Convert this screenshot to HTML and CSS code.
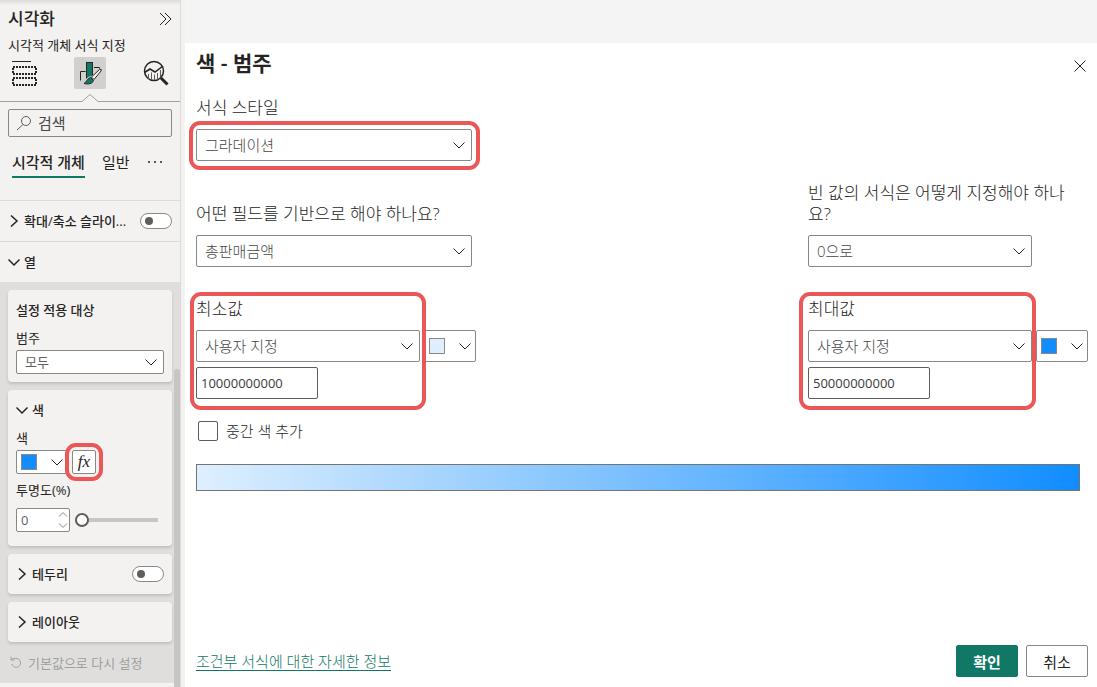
FILE: index.html
```html
<!DOCTYPE html>
<html lang="ko">
<head>
    <meta charset="UTF-8">
    <meta name="viewport" content="width=device-width, initial-scale=1.0">
    <title>색 - 범주</title>
    <link rel="stylesheet" href="styles.css">
</head>
<body>
    <svg class="defs" width="0" height="0" aria-hidden="true">
        <symbol id="chevron" viewBox="0 0 12 12"><path d="M0.5 3.5 L6 9 L11.5 3.5"/></symbol>
        <symbol id="chevron-right" viewBox="0 0 12 12"><path d="M3 0.5 L9 6 L3 11.5"/></symbol>
    </svg>

    <aside class="sidebar">
        <div class="pane-header">
            <h2>시각화</h2>
            <button class="icon-btn collapse" aria-label="접기">
                <svg width="14" height="14" viewBox="0 0 14 14"><path d="M2 1 L8 7 L2 13 M7 1 L13 7 L7 13"/></svg>
            </button>
        </div>
        <p class="pane-subtitle">시각적 개체 서식 지정</p>

        <div class="pane-icons">
            <button class="icon-btn" aria-label="시각적 개체 빌드">
                <svg width="32" height="32" viewBox="0 0 32 32">
                    <path d="M4 4.5 H23"/>
                    <path class="dashed" d="M4.5 9.5 H27.5 V16.5 H4.5 Z M4.5 20.5 H27.5 V27.5 H4.5 Z"/>
                </svg>
            </button>
            <button class="icon-btn active" aria-label="시각적 개체 서식 지정">
                <svg width="32" height="32" viewBox="0 0 32 32">
                    <path d="M11.5 14.5 H6.5 V23.5 M20 10.5 H25.5 V13"/>
                    <rect class="teal" x="12.5" y="5.5" width="6" height="17"/>
                    <path class="halo" d="M27 13 L19 21.5 C14 21 14 25 11 26"/>
                    <path class="handle" d="M17.5 20 L25.5 12.5 Q28 11.5 27 14 L20 22.5 Z"/>
                    <path class="teal" d="M16.5 20.5 L19.5 23.5 C18.5 27 14 27.5 10 26.5 C13 25 13 21.5 16.5 20.5 Z"/>
                </svg>
            </button>
            <button class="icon-btn" aria-label="분석">
                <svg width="32" height="32" viewBox="0 0 32 32">
                    <circle class="lens" cx="14" cy="14" r="9.5"/>
                    <path class="lens" d="M4.5 15.5 L10 12 L15 15 L23 9"/>
                    <path class="bars" d="M8.5 22 V17 M11.5 23 V15.5 M14.5 23 V17.5 M17.5 23 V16 M20.5 20 V13"/>
                    <path class="thick" d="M21 21 L27.5 27.5"/>
                </svg>
            </button>
        </div>
        <svg class="notch" width="16" height="8" viewBox="0 0 16 8"><path d="M0 7.5 L8 0.5 L16 7.5"/></svg>

        <div class="search">
            <svg width="16" height="16" viewBox="0 0 16 16"><circle cx="10" cy="6" r="4.5"/><path d="M7 9.5 L1 15"/></svg>
            <input type="text" placeholder="검색" aria-label="검색">
        </div>

        <nav class="tabs">
            <button class="tab selected">시각적 개체</button>
            <button class="tab">일반</button>
            <button class="tab more" aria-label="기타">
                <svg width="16" height="4" viewBox="0 0 16 4"><circle cx="2" cy="2" r="1"/><circle cx="8" cy="2" r="1"/><circle cx="14" cy="2" r="1"/></svg>
            </button>
        </nav>

        <div class="section-row">
            <svg class="chev" width="12" height="12"><use href="#chevron-right"/></svg>
            <label for="zoomSlider">확대/축소 슬라이...</label>
            <input type="checkbox" class="toggle" id="zoomSlider">
        </div>
        <div class="section-row">
            <svg class="chev" width="12" height="12"><use href="#chevron"/></svg>
            <span>열</span>
        </div>

        <div class="cards">
            <section class="card">
                <h3>설정 적용 대상</h3>
                <label class="field-label" for="category">범주</label>
                <div class="select small">
                    <select id="category"><option>모두</option></select>
                    <svg class="chev" width="12" height="12"><use href="#chevron"/></svg>
                </div>
            </section>

            <section class="card">
                <div class="card-head">
                    <svg class="chev" width="12" height="12"><use href="#chevron"/></svg>
                    <span>색</span>
                </div>
                <span class="field-label">색</span>
                <div class="color-row">
                    <button class="color-btn small" aria-label="색">
                        <span class="swatch blue"></span>
                        <svg class="chev" width="12" height="12"><use href="#chevron"/></svg>
                    </button>
                    <div class="marked mark-fx">
                        <button class="fx-btn">fx</button>
                    </div>
                </div>
                <label class="field-label opacity-label" for="opacity">투명도(%)</label>
                <div class="opacity-row">
                    <div class="spin">
                        <input type="text" id="opacity" value="0">
                        <svg width="10" height="18" viewBox="0 0 10 18"><path d="M1 5.5 L5 1.5 L9 5.5 M1 12.5 L5 16.5 L9 12.5"/></svg>
                    </div>
                    <input type="range" min="0" max="100" value="0" aria-label="투명도">
                </div>
            </section>

            <section class="card row">
                <svg class="chev" width="12" height="12"><use href="#chevron-right"/></svg>
                <label for="border">테두리</label>
                <input type="checkbox" class="toggle" id="border">
            </section>
            <section class="card row">
                <svg class="chev" width="12" height="12"><use href="#chevron-right"/></svg>
                <span>레이아웃</span>
            </section>

            <button class="reset" disabled>
                <svg width="12" height="12" viewBox="0 0 12 12"><path d="M1 0.5 V4 H4.5 M1.2 4 C4 1 10.5 2 10.5 7 C10.5 12.5 2.5 12.5 2 8"/></svg>
                기본값으로 다시 설정
            </button>
        </div>
        <div class="scrollbar"></div>
    </aside>

    <main class="dialog">
        <header class="dialog-header">
            <h1>색 - 범주</h1>
            <button class="icon-btn close" aria-label="닫기">
                <svg width="12" height="12" viewBox="0 0 12 12"><path d="M0.5 0.5 L11.5 11.5 M11.5 0.5 L0.5 11.5"/></svg>
            </button>
        </header>

        <div class="field style-field">
            <label for="formatStyle">서식 스타일</label>
            <div class="select wide marked mark-style">
                <select id="formatStyle"><option>그라데이션</option></select>
                <svg class="chev" width="12" height="12"><use href="#chevron"/></svg>
            </div>
        </div>

        <div class="fields">
            <div class="field">
                <label for="baseField">어떤 필드를 기반으로 해야 하나요?</label>
                <div class="select wide">
                    <select id="baseField"><option>총판매금액</option></select>
                    <svg class="chev" width="12" height="12"><use href="#chevron"/></svg>
                </div>
            </div>
            <div class="field">
                <label for="emptyValue">빈 값의 서식은 어떻게 지정해야 하나요?</label>
                <div class="select">
                    <select id="emptyValue"><option>0으로</option></select>
                    <svg class="chev" width="12" height="12"><use href="#chevron"/></svg>
                </div>
            </div>
        </div>

        <div class="fields">
            <div class="bound">
                <div class="field marked mark-min">
                    <label for="minType">최소값</label>
                    <div class="select">
                        <select id="minType"><option>사용자 지정</option></select>
                        <svg class="chev" width="12" height="12"><use href="#chevron"/></svg>
                    </div>
                    <input type="text" class="number" value="10000000000" aria-label="최소값 입력">
                </div>
                <button class="color-btn" aria-label="최소값 색">
                    <span class="swatch light"></span>
                    <svg class="chev" width="12" height="12"><use href="#chevron"/></svg>
                </button>
            </div>
            <div class="bound">
                <div class="field marked mark-max">
                    <label for="maxType">최대값</label>
                    <div class="select">
                        <select id="maxType"><option>사용자 지정</option></select>
                        <svg class="chev" width="12" height="12"><use href="#chevron"/></svg>
                    </div>
                    <input type="text" class="number" value="50000000000" aria-label="최대값 입력">
                </div>
                <button class="color-btn" aria-label="최대값 색">
                    <span class="swatch blue"></span>
                    <svg class="chev" width="12" height="12"><use href="#chevron"/></svg>
                </button>
            </div>
        </div>

        <label class="check"><input type="checkbox"> 중간 색 추가</label>

        <div class="gradient"></div>

        <footer class="dialog-footer">
            <a href="#">조건부 서식에 대한 자세한 정보</a>
            <button class="btn primary">확인</button>
            <button class="btn">취소</button>
        </footer>
    </main>
</body>
</html>
```

FILE: styles.css
```css
* {
    box-sizing: border-box;
}
body {
    margin: 0;
    display: flex;
    min-height: 100vh;
    font-family: "Open Sans", "Noto Sans CJK KR", sans-serif;
    font-size: 13px;
    line-height: 20px;
    color: #252423;
    background: #f3f2f1;
}
h1, h2, h3, p {
    margin: 0;
}
button, input, select {
    font-family: inherit;
    color: inherit;
    margin: 0;
}
button {
    padding: 0;
    border: none;
    background: none;
}
svg {
    display: block;
    flex: none;
    fill: none;
    stroke: #252423;
}
.defs {
    position: absolute;
}

/* left pane */
.sidebar {
    position: relative;
    flex: none;
    width: 181px;
    height: 100vh;
    overflow: hidden;
    border-right: 1px solid #dddbd9;
    background: linear-gradient(#dcdbda, #f3f2f1 5px);
}
.pane-header {
    display: flex;
    align-items: center;
    justify-content: space-between;
    height: 36px;
    padding: 2px 8px 0;
}
.pane-header h2 {
    font-size: 17px;
    font-weight: 500;
}
.pane-subtitle {
    padding: 0 8px;
    line-height: 18px;
}
.pane-icons {
    display: flex;
    justify-content: space-between;
    padding: 3px 8px 0;
}
.pane-icons .icon-btn {
    width: 32px;
    height: 32px;
    border-radius: 2px;
}
.pane-icons .active {
    background: #d2d0ce;
}
.dashed {
    stroke-dasharray: 2 1;
    stroke-width: 2;
    shape-rendering: crispEdges;
}
.teal {
    fill: #117865;
}
.halo {
    stroke: #d2d0ce;
    stroke-width: 5;
}
.handle {
    fill: #f3f2f1;
}
.lens {
    stroke-width: 1.5;
}
.bars {
    stroke: #605e5c;
}
.thick {
    stroke-width: 3;
}
.notch {
    width: 100%;
    margin-top: 5px;
    stroke: #a19f9d;
    background: linear-gradient(#a19f9d, #a19f9d) left bottom / 82px 1px no-repeat,
                linear-gradient(#a19f9d, #a19f9d) right bottom / 82px 1px no-repeat;
}
.search {
    display: flex;
    align-items: center;
    gap: 6px;
    height: 28px;
    margin: 7px 8px 0;
    padding: 0 7px;
    border: 1px solid #8a8886;
    border-radius: 2px;
}
.search svg {
    stroke: #605e5c;
}
.search input {
    flex: 1;
    min-width: 0;
    padding: 0;
    border: none;
    outline: none;
    background: none;
    font-size: 15px;
}
.search input::placeholder {
    color: #484644;
}
.tabs {
    display: flex;
    align-items: flex-start;
    gap: 17px;
    height: 64px;
    padding: 12px 12px 0;
    border-bottom: 1px solid #dddbd9;
}
.tab {
    height: 29px;
    padding-bottom: 4px;
    font-size: 15px;
    line-height: 24px;
    white-space: nowrap;
}
.tab.selected {
    padding-bottom: 2px;
    font-weight: 500;
    border-bottom: 2px solid #117865;
}
.tab.more svg {
    fill: #252423;
    stroke: none;
}
.section-row {
    display: flex;
    align-items: center;
    gap: 4px;
    height: 40px;
    padding: 0 8px;
    font-weight: 500;
    white-space: nowrap;
}
.section-row + .section-row {
    height: 41px;
    border-top: 1px solid #dddbd9;
}
.toggle {
    appearance: none;
    width: 32px;
    height: 16px;
    margin-left: auto;
    padding: 3px 4px;
    border: 1px solid #8a8886;
    border-radius: 8px;
    background: #fff;
}
.toggle::before {
    content: "";
    display: block;
    width: 8px;
    height: 8px;
    border-radius: 50%;
    background: #605e5c;
}
.cards {
    display: flex;
    flex-direction: column;
    gap: 8px;
    padding: 8px 8px 9px;
    background: #dfdedd;
}
.card {
    padding: 10px 8px 8px;
    border-radius: 4px;
    background: #f3f2f1;
    box-shadow: 0 2px 3px rgba(0, 0, 0, 0.14);
}
.card h3 {
    font-size: 13px;
    font-weight: 500;
}
.field-label {
    display: block;
    margin: 8px 0 2px;
}
.card-head {
    display: flex;
    align-items: center;
    gap: 4px;
    font-weight: 500;
}
.section-row .chev,
.card-head .chev,
.card.row .chev {
    stroke-width: 1.5;
}
.card.row {
    display: flex;
    align-items: center;
    gap: 4px;
    height: 40px;
    padding: 0 8px;
    font-weight: 500;
}
.color-row {
    display: flex;
    gap: 4px;
}
.opacity-label {
    margin-top: 6px;
}
.opacity-row {
    display: flex;
    align-items: center;
    gap: 5px;
    padding: 6px 6px 6px 0;
}
.spin {
    display: flex;
    align-items: center;
    width: 54px;
    height: 24px;
    padding: 0 1px 0 4px;
    border: 1px solid #8a8886;
    border-radius: 2px;
    background: #fff;
}
.spin input {
    flex: 1;
    min-width: 0;
    padding: 0;
    border: none;
    outline: none;
    color: #605e5c;
    font-size: 13px;
}
.spin svg {
    stroke: #8a8886;
}
input[type="range"] {
    appearance: none;
    flex: 1;
    min-width: 0;
    height: 14px;
    background: linear-gradient(#c8c6c4, #c8c6c4) center / 100% 4px no-repeat;
}
input[type="range"]::-webkit-slider-thumb {
    appearance: none;
    width: 14px;
    height: 14px;
    border: 2px solid #605e5c;
    border-radius: 50%;
    background: #fff;
}
.fx-btn {
    display: block;
    width: 24px;
    height: 24px;
    border: 1px solid #8a8886;
    border-radius: 2px;
    background: #fff;
    font: italic 17px/20px "Liberation Serif", serif;
}
.reset {
    display: flex;
    align-items: center;
    gap: 6px;
    height: 24px;
    padding: 0 2px;
    font-size: 13px;
    color: #a19f9d;
}
.reset svg {
    stroke: #a19f9d;
}
.scrollbar {
    position: absolute;
    top: 369px;
    right: 0;
    bottom: 0;
    width: 6px;
    border-radius: 3px 3px 0 0;
    background: #c8c6c4;
}

/* controls shared by the pane and the dialog */
.select {
    position: relative;
    width: 224px;
}
.select.wide {
    width: 276px;
}
.select.small {
    width: auto;
}
.select select {
    appearance: none;
    display: block;
    width: 100%;
    height: 32px;
    padding: 0 8px;
    border: 1px solid #8a8886;
    border-radius: 2px;
    background: #fff;
    color: #605e5c;
    font-size: 15px;
}
.select.small select {
    height: 24px;
    font-size: 13px;
}
.select .chev {
    position: absolute;
    top: 50%;
    right: 7px;
    margin-top: -6px;
    pointer-events: none;
}
.color-btn {
    display: flex;
    align-items: center;
    justify-content: space-between;
    width: 52px;
    height: 32px;
    padding: 0 4px;
    border: 1px solid #8a8886;
    border-radius: 2px;
    background: #fff;
}
.color-btn.small {
    height: 24px;
}
.swatch {
    width: 16px;
    height: 16px;
    border: 1px solid #8a8886;
}
.swatch.blue {
    background: #118dff;
}
.swatch.light {
    background: #deefff;
}
.marked {
    position: relative;
}
.marked::after {
    content: "";
    position: absolute;
    inset: -8px;
    border: 4px solid #eb5757;
    border-radius: 11px;
    pointer-events: none;
    z-index: 1;
}
.mark-style::after {
    inset: -8px -8px -9px -7px;
}
.mark-fx::after {
    inset: -7px;
}
.mark-min::after {
    inset: -6px -6px -11px;
}
.mark-max::after {
    inset: -6px -4px -11px -9px;
}

/* dialog */
.dialog {
    flex: 1;
    display: flex;
    flex-direction: column;
    min-width: 0;
    margin-left: 4px;
    padding: 0 9px 10px 11px;
    border-top: 43px solid #f4f4f4;
    background: #fff;
}
.dialog-header {
    display: flex;
    align-items: flex-start;
    justify-content: space-between;
    height: 43px;
    padding: 10px 2px 0 0;
}
.dialog-header h1 {
    font-size: 21px;
    font-weight: 600;
}
.dialog-header .close {
    padding-top: 7px;
}
.field {
    display: flex;
    flex-direction: column;
}
.field label {
    margin-bottom: 11px;
    font-size: 17px;
    font-weight: 300;
    line-height: 21px;
}
.style-field {
    margin-top: 11px;
}
.fields {
    display: flex;
    align-items: flex-end;
    justify-content: space-between;
    margin-top: 21px;
}
.fields .field {
    max-width: 280px;
}
.fields > .field label {
    padding-right: 8px;
    word-break: break-all;
}
.fields + .fields {
    margin-top: 31px;
}
.bound {
    display: flex;
    gap: 4px;
}
.bound .color-btn {
    margin-top: 32px;
}
.dialog select {
    font-weight: 300;
    color: #484644;
}
.number {
    width: 122px;
    height: 32px;
    margin-top: 5px;
    padding: 0 4px;
    border: 1px solid #605e5c;
    border-radius: 2px;
    color: #3b3a39;
    font-size: 13px;
}
.check {
    display: flex;
    align-items: center;
    gap: 8px;
    margin: 22px 0 0 2px;
    font-size: 15px;
    font-weight: 300;
}
.check input {
    appearance: none;
    width: 20px;
    height: 20px;
    border: 1px solid #605e5c;
    border-radius: 2px;
}
.gradient {
    height: 27px;
    margin: 23px 8px 20px 0;
    border: 1px solid #767472;
    background: linear-gradient(to right, #deefff, #118dff);
}
.dialog-footer {
    display: flex;
    align-items: center;
    gap: 8px;
    margin-top: auto;
}
.dialog-footer a {
    margin-right: auto;
    color: #117865;
    font-size: 15px;
    font-weight: 300;
    text-underline-offset: 3px;
}
.btn {
    width: 62px;
    height: 32px;
    border: 1px solid #8a8886;
    border-radius: 2px;
    background: #fff;
    font-size: 15px;
}
.btn.primary {
    border-color: #117865;
    background: #117865;
    color: #fff;
    font-weight: 600;
}
```
